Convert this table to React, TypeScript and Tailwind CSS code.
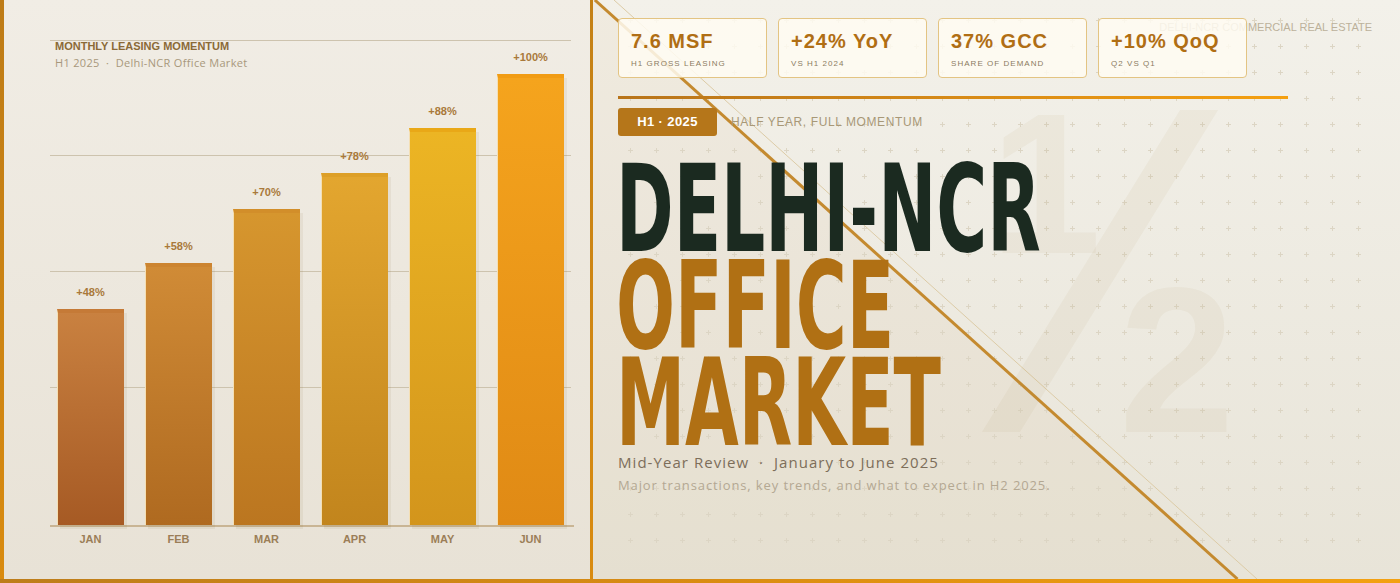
import React from 'react';

const bars = [
  { m: 'JAN', v: 48, cls: 'border-t-[#c57a37] from-[#c98140] to-[#a65a24]' },
  { m: 'FEB', v: 58, cls: 'border-t-[#cc8430] from-[#d08b36] to-[#af6a20]' },
  { m: 'MAR', v: 70, cls: 'border-t-[#d28e2a] from-[#d6962e] to-[#bb7620]' },
  { m: 'APR', v: 78, cls: 'border-t-[#dd9f27] from-[#e3a62f] to-[#c2851d]' },
  { m: 'MAY', v: 88, cls: 'border-t-[#e9a817] from-[#ecb524] to-[#d3951c]' },
  { m: 'JUN', v: 100, cls: 'border-t-[#f19c14] from-[#f5a41d] to-[#e08a15]' },
];

const gridTops = ['top-0', 'top-[115px]', 'top-[231px]', 'top-[347px]'];

const stats = [
  ['7.6 MSF', 'H1 GROSS LEASING'],
  ['+24% YoY', 'VS H1 2024'],
  ['37% GCC', 'SHARE OF DEMAND'],
  ['+10% QoQ', 'Q2 VS Q1'],
];

const MAX_BAR = 451;

function ChartPanel() {
  return (
    <div className="w-[586px] bg-linear-to-b from-[#f1ede5] to-[#e8e2d6] pl-[46px] pt-[40px]">
      <div className="relative h-[485px] w-[524px]">
        {gridTops.map((t) => (
          <div key={t} className={`absolute left-0 h-px w-[521px] bg-[#cdc3ae] ${t}`} />
        ))}

        {/* chart title sits over the plot area */}
        <div className="absolute left-[5px] top-[-1px]">
          <div className="text-[11px] font-bold leading-[14px] text-[#8b6a37]">MONTHLY LEASING MOMENTUM</div>
          <div className="mt-[3px] font-['Open_Sans',sans-serif] text-[11px] leading-[14px] tracking-[0.03em] text-[#a8987c]">
            H1 2025 &nbsp;·&nbsp; Delhi-NCR Office Market
          </div>
        </div>

        <div className="relative flex h-full items-end gap-[21px] pl-[7px]">
          {bars.map((b) => (
            <div key={b.m} className="flex w-[67px] flex-col items-center">
              <div className="mb-[10px] text-[11px] font-bold leading-[14px] text-[#a9793a]">+{b.v}%</div>
              <div
                className={`w-full border-t-4 border-l border-l-[#f4dfb4] bg-linear-to-b shadow-[3px_4px_0_rgba(110,80,30,0.07)] ${b.cls}`}
                style={{ height: (b.v / 100) * MAX_BAR }}
              />
            </div>
          ))}
        </div>
      </div>
      <div className="h-[2px] w-[524px] bg-[#c9b594]" />
      <div className="mt-[5px] flex gap-[21px] pl-[7px]">
        {bars.map((b) => (
          <div key={b.m} className="w-[67px] text-center text-[11px] font-bold leading-[14px] text-[#9b7e57]">
            {b.m}
          </div>
        ))}
      </div>
    </div>
  );
}

function Backdrop() {
  return (
    <svg className="pointer-events-none absolute left-0 top-0" width="807" height="579">
      <defs>
        <pattern id="plus" width="26" height="26" patternUnits="userSpaceOnUse">
          <path d="M9 20.5h5M11.5 18v5" stroke="#dcd5c4" strokeWidth="1" />
        </pattern>
      </defs>
      <polygon points="0,0 1.8,0 644.5,579 0,579" fill="#c9a56d" opacity="0.08" />
      <rect x="30" y="8" width="740" height="545" fill="url(#plus)" />
      <line x1="21" y1="0" x2="664" y2="579" stroke="#dccba6" strokeWidth="1" />
      <line x1="1.8" y1="0" x2="644.5" y2="579" stroke="#c48a2f" strokeWidth="3" />
    </svg>
  );
}

function Watermark() {
  return (
    <div className="pointer-events-none text-[#a88850]/[0.07]">
      <div className="absolute left-[397px] top-[84px] text-[200px] font-bold leading-none">1</div>
      <div className="absolute left-[488px] top-[110px] h-[322px] w-[38px] skew-x-[-31.6deg] bg-[#a88850]/[0.07]" />
      <div className="absolute left-[526px] top-[256px] text-[208px] font-bold leading-none">2</div>
    </div>
  );
}

function HeroPanel() {
  return (
    <div className="relative flex-1 overflow-hidden bg-linear-to-b from-[#f3f1ea] to-[#e8e4d8]">
      <Backdrop />
      <Watermark />
      <div className="absolute right-[28px] top-[20px] text-[11px] leading-[14px] text-[#bcb19b]">
        DELHI-NCR COMMERCIAL REAL ESTATE
      </div>

      <div className="relative pl-[25px] pt-[18px]">
        <div className="flex gap-[11px]">
          {stats.map(([value, label]) => (
            <div
              key={value}
              className="h-[60px] w-[149px] rounded-[4px] border border-[#e3c483] bg-[#fffbf2]/85 pl-[12px] pt-[9px]"
            >
              <div className="text-[20px] font-bold leading-[26px] tracking-[0.05em] text-[#b06e14]">{value}</div>
              <div className="mt-[5px] text-[8px] leading-[10px] tracking-[0.13em] text-[#8c7c62]">{label}</div>
            </div>
          ))}
        </div>

        <div className="mt-[18px] h-[3px] w-[670px] bg-linear-to-r from-[#b8741a] to-[#f5a010]" />

        <div className="mt-[9px] flex items-center gap-[14px]">
          <div className="flex h-[28px] w-[99px] items-center justify-center rounded-[3px] bg-[#b5761a] text-[13px] font-bold tracking-[0.03em] text-white">
            H1 · 2025
          </div>
          <div className="text-[12px] tracking-[0.05em] text-[#a89877]">HALF YEAR, FULL MOMENTUM</div>
        </div>

        <div className="ml-[-2px] mt-[25px] origin-left scale-x-[0.574] whitespace-nowrap font-['DejaVu_Sans',sans-serif] text-[121px] font-bold leading-[97px]">
          <div className="text-[#1b2a20]">DELHI-NCR</div>
          <div className="text-[#b07014]">OFFICE</div>
          <div className="text-[#b07014]">MARKET</div>
        </div>

        <div className="mt-0 font-['Open_Sans',sans-serif] text-[15px] leading-[20px] tracking-[0.07em] text-[#7d6e5a]">
          Mid-Year Review &nbsp;·&nbsp; January to June 2025
        </div>
        <div className="mt-[4px] font-['Open_Sans',sans-serif] text-[13px] leading-[18px] tracking-[0.068em] text-[#b4a892]">
          Major transactions, key trends, and what to expect in H2 2025.
        </div>
      </div>
    </div>
  );
}

export default function App() {
  return (
    <div className="flex h-[583px] w-[1400px] flex-col overflow-hidden font-['Liberation_Sans',Arial,sans-serif]">
      <div className="flex min-h-0 flex-1">
        <div className="w-[4px] bg-linear-to-b from-[#be7c17] to-[#d98b0f]" />
        <ChartPanel />
        <div className="w-[3px] bg-linear-to-b from-[#c48116] to-[#d98b0f]" />
        <HeroPanel />
      </div>
      <div className="h-[4px] bg-linear-to-r from-[#bd7d1a] via-[#d98c12] to-[#f3a112]" />
    </div>
  );
}
